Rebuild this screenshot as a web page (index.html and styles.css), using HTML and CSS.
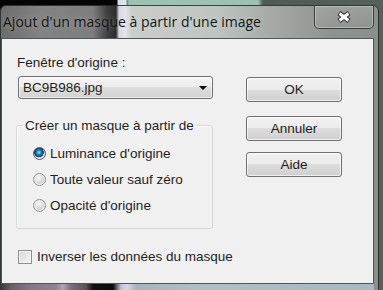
FILE: index.html
```html
<!DOCTYPE html>
<html lang="fr">
<head>
    <meta charset="UTF-8">
    <title>Ajout d'un masque à partir d'une image</title>
    <link rel="stylesheet" href="styles.css">
</head>
<body>
    <div class="desktop">
        <div class="window">
            <div class="titlebar">
                <span class="title">Ajout d'un masque à partir d'une image</span>
                <div class="close-btn">
                    <svg width="16" height="12" viewBox="0 0 16 12">
                        <path d="M3 2 L13 10 M13 2 L3 10" stroke="#2e3331" stroke-width="5" fill="none"/>
                        <path d="M3.6 2.5 L12.4 9.5 M12.4 2.5 L3.6 9.5" stroke="#ffffff" stroke-width="3" fill="none"/>
                    </svg>
                </div>
            </div>

            <div class="client">
                <div class="left-col">
                    <label class="field-label">Fenêtre d'origine :</label>
                    <div class="combo">
                        <span>BC9B986.jpg</span>
                        <span class="arrow"></span>
                    </div>

                    <fieldset class="group">
                        <legend>Créer un masque à partir de</legend>
                        <div class="radio-list">
                            <div class="radio-row"><span class="radio checked"></span>Luminance d'origine</div>
                            <div class="radio-row"><span class="radio"></span>Toute valeur sauf zéro</div>
                            <div class="radio-row"><span class="radio"></span>Opacité d'origine</div>
                        </div>
                    </fieldset>

                    <div class="check-row"><span class="checkbox"></span>Inverser les données du masque</div>
                </div>

                <div class="right-col">
                    <div class="btn btn-default">OK</div>
                    <div class="btn">Annuler</div>
                    <div class="btn">Aide</div>
                </div>
            </div>

            <div class="frame-bottom"></div>
        </div>
    </div>
</body>
</html>
```

FILE: styles.css
```css
* {
    box-sizing: border-box;
}

body {
    margin: 0;
    font-family: "Liberation Sans", Arial, sans-serif;
    font-size: 13.5px;
    color: #1e1e1e;
}

/* what shows behind the glass */
.desktop {
    width: 383px;
    height: 290px;
    overflow: hidden;
    padding-top: 5px;
    background: linear-gradient(to right, #050505 0, #050505 117px, #dcdce8 118px, #e4e4ee 126px, #6e8078 127px, #9cc2b3 129px, #9cc2b3 258px, #4d5b53 263px, #55625b 383px);
}

.window {
    width: 379px;
    height: 285px;
    border: 1px solid rgba(28, 32, 30, 0.8);
    border-bottom: none;
    border-radius: 6px 6px 0 0;
    background: linear-gradient(to right, #6c6c6c 0, #838383 40px, #7d7d7d 92px, #404040 106px, #2c2c2c 115px, #d8d8e0 118px, #e4e4ea 124px, #cacdca 131px, #c0c4c0 215px, #a6aaa6 270px, #8e938f 330px, #8a8f8b 379px);
    display: flex;
    flex-direction: column;
}

.titlebar {
    height: 32px;
    display: flex;
    justify-content: space-between;
    align-items: flex-start;
}

.title {
    font-family: "Open Sans", "Noto Sans", sans-serif;
    font-size: 14px;
    line-height: 20px;
    padding: 6px 0 0 2px;
    color: #151515;
    text-shadow: 0 0 6px rgba(255, 255, 255, 0.35);
}

.close-btn {
    width: 60px;
    height: 23px;
    margin-right: 4px;
    border: 1px solid rgba(40, 46, 43, 0.85);
    border-top: none;
    border-radius: 0 0 5px 5px;
    box-shadow: inset 0 0 0 1px rgba(255, 255, 255, 0.3);
    background: linear-gradient(rgba(255, 255, 255, 0.14), rgba(255, 255, 255, 0.04));
    display: flex;
    align-items: center;
    justify-content: center;
}

.client {
    height: 246px;
    margin-right: 4px;
    border: 1px solid #50565a;
    background-color: #f0f0f0;
    display: flex;
    padding: 16px 0 0 14px;
}

.left-col {
    width: 197px;
    display: flex;
    flex-direction: column;
    align-items: flex-start;
}

.field-label {
    line-height: 15px;
    margin-left: 1px;
}

.combo {
    margin: 6px 0 0 2px;
    width: 195px;
    height: 23px;
    border: 1px solid #707070;
    border-radius: 3px;
    background: linear-gradient(#f4f4f4 0%, #ececec 50%, #dedede 50%, #d2d2d2 100%);
    box-shadow: inset 0 0 0 1px rgba(255, 255, 255, 0.6);
    display: flex;
    align-items: center;
    justify-content: space-between;
    padding: 0 5px 0 4px;
}

.arrow {
    width: 0;
    height: 0;
    border-left: 4px solid transparent;
    border-right: 4px solid transparent;
    border-top: 4px solid #000;
}

/* Group box */
.group {
    margin: 19px 0 0 0;
    width: 197px;
    border: 1px solid #d5d8da;
    border-radius: 3px;
    box-shadow: inset 1px 1px 0 #fff;
    padding: 0 8px 10px 16px;
}

.group legend {
    padding: 0 2px;
    margin-left: -10px;
    line-height: 15px;
}

.radio-list {
    padding-top: 7px;
}

.radio-row {
    height: 26px;
    display: flex;
    align-items: center;
    gap: 4px;
}

.radio {
    width: 13px;
    height: 13px;
    border-radius: 50%;
    border: 1px solid #8e8f8f;
    background: radial-gradient(circle at 40% 35%, #f6f6f6 0, #e6e6e6 3px, #cfcfcf 6px);
    box-shadow: inset 0 0 0 1px #f4f4f4;
}

.radio.checked {
    border-color: #4c555c;
    background: radial-gradient(circle at 45% 40%, #b9e6ff 0, #3b9fde 1.5px, #0f5b95 3.5px, #173c58 4.6px, #c4c8cc 5px, #eef0f2 6px);
    box-shadow: none;
}

.check-row {
    margin: 20px 0 0 2px;
    display: flex;
    align-items: center;
    gap: 5px;
    line-height: 15px;
    white-space: nowrap;
}

.checkbox {
    flex: none;
    width: 14px;
    height: 14px;
    border: 1px solid #8e8f8f;
    background: linear-gradient(135deg, #d6d6d6, #f6f6f6);
    box-shadow: inset 0 0 0 1px #f2f2f2;
}

/* Right column buttons */
.right-col {
    margin-left: 33px;
    padding-top: 22px;
    display: flex;
    flex-direction: column;
    gap: 11px;
}

.btn {
    width: 96px;
    height: 25px;
    border: 1px solid #707070;
    border-radius: 3px;
    background: linear-gradient(#f2f2f2 0%, #ebebeb 50%, #dddddd 50%, #cfcfcf 100%);
    box-shadow: inset 0 0 0 1px rgba(255, 255, 255, 0.65);
    display: flex;
    align-items: center;
    justify-content: center;
}

.btn-default {
    margin-bottom: 3px;
}

.frame-bottom {
    height: 6px;
    margin-right: 4px;
    background: linear-gradient(to right, #3a3a3a 0, #6a5e68 10px, #857888 30px, #8e8290 55px, #b0a6b4 62px, #7a6e7a 70px, #5a505a 85px, #101010 92px, #0a0a0a 112px, #c8c0d8 120px, #d8d4e8 126px, #a8b4bc 135px, #b0bec6 200px, #a8b8c0 375px);
}
```
